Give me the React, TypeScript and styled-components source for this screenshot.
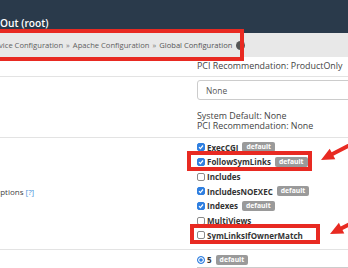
import React from "react";
import styled, { createGlobalStyle } from "styled-components";

const GlobalStyle = createGlobalStyle`
  html, body {
    margin: 0;
    padding: 0;
    background: #fff;
    overflow: hidden;
  }
  body {
    font-family: "Open Sans", "Liberation Sans", sans-serif;
    color: #333;
  }
`;

const Screen = styled.div`
  position: relative;
  width: 348px;
  height: 268px;
  overflow: hidden;
`;

const TopBar = styled.header`
  height: 33px;
  background: #2a3a4b;
  color: #fff;
  font-size: 10.2px;
  font-weight: 600;
  display: flex;
  align-items: flex-end;
  padding-bottom: 3px;
  box-sizing: border-box;
`;

const Crumbs = styled.nav`
  height: 24px;
  background: #e8e8e8;
  color: #5f5f5f;
  font-size: 7.6px;
  display: flex;
  align-items: center;
  white-space: nowrap;
  margin-left: -12.5px;
`;

const Sep = styled.span`
  margin: 0 3px;
  color: #777;
`;

const Current = styled.span`
  color: #555;
`;

const HelpDot = styled.span`
  display: inline-block;
  width: 9px;
  height: 9px;
  border-radius: 50%;
  background: #555;
  margin-left: 4px;
`;

const Table = styled.div`
  margin-left: -6px;
  display: grid;
  grid-template-columns: 203px 1fr;
  font-size: 8.9px;
`;

const Row = styled.div<{ $pad?: string }>`
  display: contents;
  & > * {
    border-bottom: 1px solid #e3e3e3;
    padding: ${(p) => p.$pad || "4px 0"};
  }
`;

const Label = styled.div<{ $top?: boolean }>`
  display: flex;
  align-items: ${(p) => (p.$top ? "flex-start" : "center")};
  color: #444;
  font-size: 8px;
`;

const Help = styled.span<{ $low?: boolean }>`
  color: #4a90d9;
  margin-left: 2px;
  margin-top: ${(p) => (p.$low ? "12px" : "0")};
`;

const Cell = styled.div`
  display: flex;
  flex-direction: column;
  min-width: 0;
`;

const Note = styled.div`
  line-height: 10px;
  height: 10px;
  color: #444;
  white-space: nowrap;
`;

const Select = styled.div`
  height: 20px;
  border: 1px solid #ccc;
  border-radius: 3px;
  margin-right: -20px;
  display: flex;
  align-items: center;
  padding-left: 8px;
  color: #555;
  box-sizing: border-box;
  margin-bottom: 11px;
  font-size: 8.4px;
`;

const Option = styled.label`
  display: flex;
  align-items: center;
  height: 14.67px;
  font-size: 8px;
  font-weight: 700;
  color: #333;
  white-space: nowrap;
`;

const Box = styled.span<{ $on?: boolean; $round?: boolean }>`
  width: 8px;
  height: 8px;
  box-sizing: border-box;
  border-radius: ${(p) => (p.$round ? "50%" : "2px")};
  border: 1px solid ${(p) => (p.$on ? "#2f7fe0" : "#8a8a8a")};
  background: ${(p) => (p.$on ? "#2f7fe0" : "#fff")};
  box-shadow: ${(p) => (p.$round ? "inset 0 0 0 1.2px #fff" : "none")};
  margin-right: 2px;
  display: inline-flex;
  align-items: center;
  justify-content: center;
`;

const Badge = styled.span`
  background: #9a9a9a;
  color: #fff;
  font-size: 6.8px;
  font-weight: 700;
  padding: 1px 4px;
  border-radius: 2px;
  margin-left: 4px;
  line-height: 8px;
`;

const Field = styled.div`
  height: 10px;
  border-top: 1px solid #ccc;
  margin-right: -20px;
`;

const Marker = styled.div`
  position: absolute;
  border: 4px solid #e82a22;
  box-sizing: border-box;
`;

const Overlay = styled.svg`
  position: absolute;
  left: 0;
  top: 0;
  pointer-events: none;
`;

const Tick = () => (
  <svg width="6" height="6" viewBox="0 0 6 6">
    <path d="M1 3.2 L2.4 4.6 L5 1.5" stroke="#fff" strokeWidth="1.2" fill="none" />
  </svg>
);

const options = [
  { name: "ExecCGI", on: true, def: true },
  { name: "FollowSymLinks", on: true, def: true },
  { name: "Includes", on: false, def: false },
  { name: "IncludesNOEXEC", on: true, def: true },
  { name: "Indexes", on: true, def: true },
  { name: "MultiViews", on: false, def: false },
  { name: "SymLinksIfOwnerMatch", on: false, def: false },
];

export default function App() {
  return (
    <Screen>
      <GlobalStyle />
      <TopBar>Out (root)</TopBar>
      <Crumbs>
        Service Configuration<Sep>»</Sep>Apache Configuration<Sep>»</Sep>
        <Current>Global Configuration</Current>
        <HelpDot />
      </Crumbs>
      <Table>
        <Row $pad="4px 0 5px">
          <Label />
          <Cell>
            <Note>PCI Recommendation: ProductOnly</Note>
          </Cell>
        </Row>
        <Row $pad="3px 0 6px">
          <Label />
          <Cell>
            <Select>None</Select>
            <Note>System Default: None</Note>
            <Note>PCI Recommendation: None</Note>
          </Cell>
        </Row>
        <Row $pad="2px 0 6px">
          <Label>
            Options<Help>[?]</Help>
          </Label>
          <Cell>
            {options.map((o) => (
              <Option key={o.name}>
                <Box $on={o.on}>{o.on && <Tick />}</Box>
                {o.name}
                {o.def && <Badge>default</Badge>}
              </Option>
            ))}
          </Cell>
        </Row>
        <Row $pad="3px 0 0">
          <Label $top>
            <Help $low>[?]</Help>
          </Label>
          <Cell>
            <Option>
              <Box $on $round />5<Badge>default</Badge>
            </Option>
            <Field />
          </Cell>
        </Row>
      </Table>

      <Marker style={{ left: -6, top: 29, width: 250, height: 32 }} />
      <Marker style={{ left: 187, top: 151, width: 125, height: 20 }} />
      <Marker style={{ left: 190, top: 224, width: 130, height: 20 }} />
      <Overlay width="348" height="268" viewBox="0 0 348 268">
        <path
          d="M321 160 L329.7 148.7 L331.6 152.2 L355.6 139.8 L357.4 143.4 L333.4 155.8 L335.3 159.3 Z"
          fill="#e82a22"
        />
        <path
          d="M330 234 L338.9 222.8 L340.7 226.4 L360.4 216.6 L362.2 220.2 L342.5 230 L344.3 233.6 Z"
          fill="#e82a22"
        />
      </Overlay>
    </Screen>
  );
}
